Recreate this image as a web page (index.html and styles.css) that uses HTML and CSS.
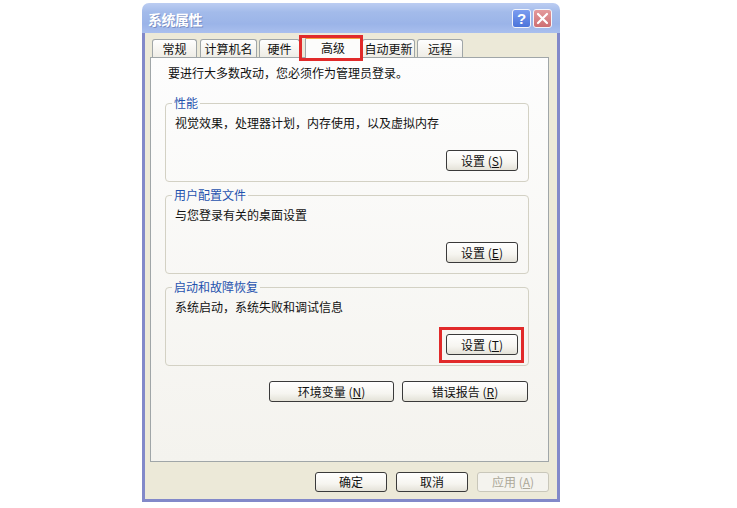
FILE: index.html
```html
<!DOCTYPE html>
<html lang="zh-CN">
<head>
<meta charset="utf-8">
<title>系统属性</title>
<link rel="stylesheet" href="styles.css">
</head>
<body>
<div class="window">
  <div class="titlebar">
    <span class="title">系统属性</span>
    <div class="caption-btns">
      <span class="cap help">?</span>
      <span class="cap close"><svg width="13" height="13" viewBox="0 0 13 13"><path d="M2 2 L11 11 M11 2 L2 11" stroke="#fff" stroke-width="2.2" stroke-linecap="round"/></svg></span>
    </div>
  </div>
  <div class="client">
    <div class="tabs">
      <span class="tab t1">常规</span>
      <span class="tab t2">计算机名</span>
      <span class="tab t3">硬件</span>
      <span class="tab sel t4">高级<span class="mark mark-tab"></span></span>
      <span class="tab t5">自动更新</span>
      <span class="tab t6">远程</span>
    </div>
    <div class="panel">
      <p class="intro">要进行大多数改动，您必须作为管理员登录。</p>
      <fieldset class="group">
        <legend>性能</legend>
        <p class="desc">视觉效果，处理器计划，内存使用，以及虚拟内存</p>
        <div class="row"><button class="btn">设置 (<u>S</u>)</button></div>
      </fieldset>
      <fieldset class="group">
        <legend>用户配置文件</legend>
        <p class="desc">与您登录有关的桌面设置</p>
        <div class="row"><button class="btn">设置 (<u>E</u>)</button></div>
      </fieldset>
      <fieldset class="group">
        <legend>启动和故障恢复</legend>
        <p class="desc">系统启动，系统失败和调试信息</p>
        <div class="row"><span class="hl"><button class="btn">设置 (<u>T</u>)</button><span class="mark mark-btn"></span></span></div>
      </fieldset>
      <div class="env-row">
        <button class="btn wide1">环境变量 (<u>N</u>)</button>
        <button class="btn wide2">错误报告 (<u>R</u>)</button>
      </div>
    </div>
    <div class="footer">
      <button class="btn low">确定</button>
      <button class="btn low">取消</button>
      <button class="btn low disabled">应用 (<u>A</u>)</button>
    </div>
  </div>
</div>
</body>
</html>
```

FILE: styles.css
```css
html, body {
  margin: 0;
  padding: 0;
  background: #ffffff;
}
body {
  font-family: "Noto Sans CJK SC", "Liberation Sans", sans-serif;
  font-size: 12px;
  color: #111;
  padding: 3px 0 0 142px;
}
.window {
  width: 418px;
}
.titlebar {
  height: 30px;
  box-sizing: border-box;
  border-radius: 7px 7px 0 0;
  background: linear-gradient(#bccdf2 0%, #a3bbea 30%, #9bb4e8 70%, #a9bfee 100%);
  display: flex;
  align-items: center;
  justify-content: space-between;
  padding: 1px 8px 0 6px;
}
.title {
  color: #ffffff;
  font-size: 14px;
  font-weight: bold;
  letter-spacing: -0.5px;
  text-shadow: 1px 1px 0 #7a8fc4;
}
.caption-btns {
  display: flex;
  gap: 2px;
}
.cap {
  width: 19px;
  height: 19px;
  box-sizing: border-box;
  border: 1px solid #f2f4fb;
  border-radius: 3px;
  display: flex;
  align-items: center;
  justify-content: center;
}
.help {
  background: linear-gradient(#7c9df0, #4b74da);
  color: #fff;
  font-weight: bold;
  font-size: 15px;
  font-family: "Liberation Sans", sans-serif;
}
.close {
  background: linear-gradient(#e49a9c, #cd6e72);
}
.client {
  background: #ece9d8;
  border: 3px solid #8289c9;
  border-top: none;
  padding: 6px 8px 7px 5px;
}
.tabs {
  display: flex;
  align-items: flex-end;
  height: 18px;
  padding-left: 2px;
  position: relative;
  z-index: 2;
}
.tab {
  height: 18px;
  box-sizing: border-box;
  border: 1px solid #a0a6a8;
  border-bottom: none;
  border-radius: 3px 3px 0 0;
  background: linear-gradient(#fefefe, #efede6);
  display: flex;
  align-items: center;
  justify-content: center;
  margin-right: 2px;
  line-height: 14px;
}
.t1 { width: 45px; margin-right: 3px; }
.t2 { width: 57px; }
.t3 { width: 41px; margin-right: 5px; }
.t4 { width: 56px; margin-right: 1px; }
.t5 { width: 53px; }
.t6 { width: 46px; }
.tab.sel {
  height: 22px;
  margin-bottom: -1px;
  background: #fcfcfb;
  border-top: 3px solid #f2a541;
  padding-bottom: 2px;
  position: relative;
}
.mark {
  position: absolute;
  border: 3px solid #e12a2a;
  pointer-events: none;
}
.mark-tab {
  left: -7px;
  right: -3px;
  top: -4px;
  bottom: -3px;
}
.panel {
  height: 405px;
  box-sizing: border-box;
  border: 1px solid #a0a6a8;
  background: linear-gradient(#fdfdfd, #f4f3ee);
  padding: 8px 19px 0 14px;
}
.intro {
  margin: 0 0 0 3px;
  line-height: 14px;
}
.group {
  margin: 15px 0 0 0;
  border: 1px solid #d3d1c4;
  border-radius: 4px;
  padding: 0 10px 10px 6px;
  min-width: 0;
}
.group + .group {
  margin-top: 5px;
}
.group legend {
  padding: 0 2px;
  line-height: 16px;
  color: #1f52ae;
}
.desc {
  margin: 5px 0 0 3px;
  line-height: 14px;
}
.row {
  margin-top: 20px;
  display: flex;
  justify-content: flex-end;
}
.btn {
  font-family: "Noto Sans CJK SC", "Liberation Sans", sans-serif;
  font-size: 12px;
  color: #111;
  width: 72px;
  height: 21px;
  box-sizing: border-box;
  border: 1px solid #3a3a3a;
  border-radius: 3px;
  background: linear-gradient(#ffffff 0%, #f6f5f0 60%, #e4e2d8 100%);
  padding: 0;
  line-height: 17px;
  margin: 0;
}
.btn u {
  text-underline-offset: 1px;
}
.hl {
  position: relative;
  display: inline-block;
  line-height: 0;
}
.mark-btn {
  left: -7px;
  right: -6px;
  top: -7px;
  bottom: -8px;
}
.env-row {
  margin-top: 15px;
  margin-right: 1px;
  display: flex;
  justify-content: flex-end;
  gap: 8px;
}
.wide1 { width: 125px; }
.wide2 { width: 126px; }
.footer {
  margin-top: 10px;
  display: flex;
  justify-content: flex-end;
  gap: 9px;
}
.btn.low {
  height: 20px;
  line-height: 16px;
}
.btn.disabled {
  color: #aca899;
  border-color: #c9c7ba;
  background: #f4f3ee;
}
```
